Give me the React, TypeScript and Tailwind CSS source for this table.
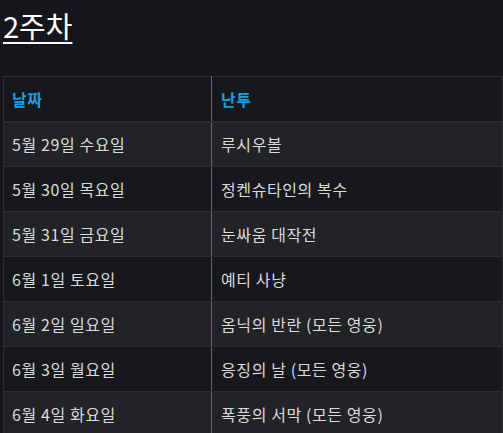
import React from "react";

const rows = [
  ["5월 29일 수요일", "루시우볼"],
  ["5월 30일 목요일", "정켄슈타인의 복수"],
  ["5월 31일 금요일", "눈싸움 대작전"],
  ["6월 1일 토요일", "예티 사냥"],
  ["6월 2일 일요일", "옴닉의 반란 (모든 영웅)"],
  ["6월 3일 월요일", "응징의 날 (모든 영웅)"],
  ["6월 4일 화요일", "폭풍의 서막 (모든 영웅)"],
];

export default function App() {
  return (
    <div
      className="w-[503px] h-[433px] overflow-hidden bg-[#151619] pl-[3px]"
      style={{ fontFamily: '"Noto Sans CJK KR", "Noto Sans", sans-serif' }}
    >
      <div className="pt-[8px] h-[76px]">
        <a className="text-[29px] leading-[34px] text-white underline decoration-2 underline-offset-[4px] font-normal">
          2주차
        </a>
      </div>
      <table className="w-[500px] border-collapse text-[16px] tracking-[0.6px]">
        <colgroup>
          <col className="w-[208px]" />
          <col />
        </colgroup>
        <thead>
          <tr className="h-[45px] bg-[#17181b] border-b-2 border-[#2c2d31]">
            <th className="text-left font-bold text-[#1b9de2] pl-[8px] border border-[#2c2d31] border-r-[#666]">
              날짜
            </th>
            <th className="text-left font-bold text-[#1b9de2] pl-[9px] border border-[#2c2d31]">
              난투
            </th>
          </tr>
        </thead>
        <tbody>
          {rows.map((r, i) => (
            <tr
              key={i}
              className={`h-[45px] ${i % 2 === 0 ? "bg-[#222326]" : "bg-[#17181b]"}`}
            >
              <td className="pl-[8px] text-[#dadada] border border-[#2c2d31] border-r-[#666]">
                {r[0]}
              </td>
              <td className="pl-[9px] text-[#dadada] border border-[#2c2d31]">
                {r[1]}
              </td>
            </tr>
          ))}
        </tbody>
      </table>
    </div>
  );
}
